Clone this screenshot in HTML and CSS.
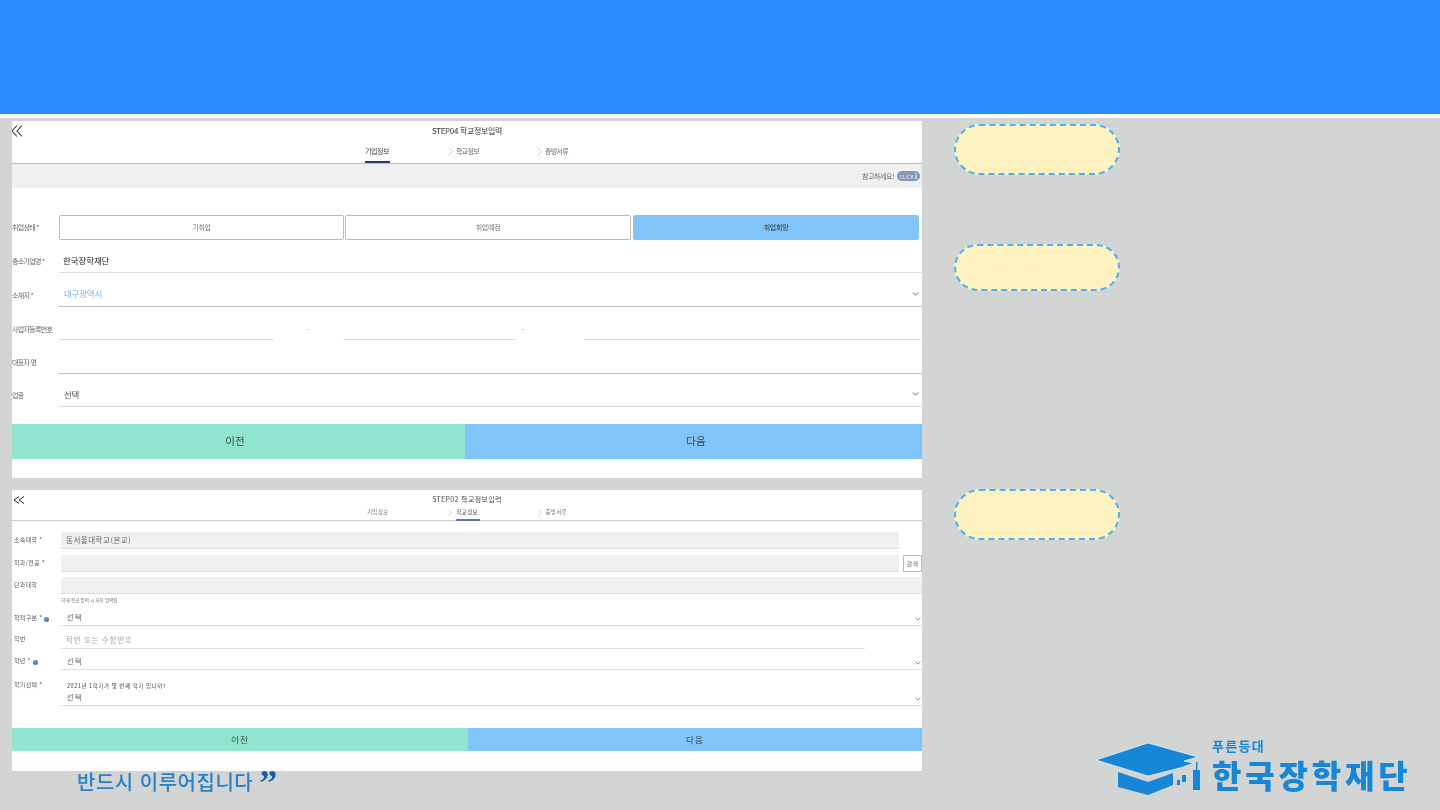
FILE: index.html
```html
<!DOCTYPE html>
<html lang="ko">
<head>
<meta charset="utf-8">
<title>한국장학재단</title>
<link rel="stylesheet" href="styles.css">
</head>
<body>
<header class="banner"></header>
<div class="stripe"></div>
<main class="main">
  <div class="shots">
    <section class="panel panel-a">
      <div class="head-a">
        <svg class="back" viewBox="0 0 10 12" width="10" height="12"><path d="M5 .5 0 6l5 5.500M10 .5 5 6l5 5.500" fill="none" stroke="#333" stroke-width="1.100"/></svg>
        <div class="title">STEP04 학교정보입력</div>
        <div class="tabs tabs-a">
          <span class="tab on">기업정보</span>
          <span class="tab t2"><svg class="gt" viewBox="0 0 5 9" width="5" height="9"><path d="M.5.5 4.500 4.500.5 8.500" fill="none" stroke="#ccc"/></svg>학교정보</span>
          <span class="tab t3"><svg class="gt" viewBox="0 0 5 9" width="5" height="9"><path d="M.5.5 4.500 4.500.5 8.500" fill="none" stroke="#ccc"/></svg>증빙서류</span>
        </div>
      </div>
      <div class="notice"><span class="notice-text">참고하세요!</span><span class="pill">CLICK <b>i</b></span></div>
      <div class="choices">
        <span class="lab lab-choice">취업상태 *</span>
        <div class="choice c1">기취업</div>
        <div class="choice c2">취업예정</div>
        <div class="choice sel">취업희망</div>
      </div>
      <div class="row r-light"><span class="lab">중소기업명 *</span><div class="val dark">한국장학재단</div></div>
      <div class="row r-strong r-tall"><span class="lab">소재지 *</span><div class="val blue">대구광역시</div>
        <svg class="chev" viewBox="0 0 8 5" width="7" height="4"><path d="M.5.5 4 4l3.500-3.500" fill="none" stroke="#444"/></svg></div>
      <div class="row biz"><span class="lab">사업자등록번호</span>
        <div class="seg s1"></div><span class="dash d1">-</span><div class="seg s2"></div><span class="dash d2">-</span><div class="seg s3"></div></div>
      <div class="row r-strong r-tall"><span class="lab">대표자 명</span></div>
      <div class="row r-light"><span class="lab">업종</span><div class="val">선택</div>
        <svg class="chev" viewBox="0 0 8 5" width="7" height="4"><path d="M.5.5 4 4l3.500-3.500" fill="none" stroke="#444"/></svg></div>
      <div class="actions act-a"><div class="prev pa">이전</div><div class="next na">다음</div></div>
    </section>

    <section class="panel panel-b">
      <div class="head-b">
        <svg class="back back-b" viewBox="0 0 10 8" width="10" height="8"><path d="M5 .5 0 4l5 3.500M10 .5 5 4l5 3.500" fill="none" stroke="#222" stroke-width="1"/></svg>
        <div class="title title-b">STEP02 학교정보입력</div>
        <div class="tabs tabs-b">
          <span class="tab">기업정보</span>
          <span class="tab t2b on-b"><svg class="gt gtb" viewBox="0 0 4 7" width="4" height="7"><path d="M.5.5 3.500 3.500.5 6.500" fill="none" stroke="#ccc"/></svg><i class="ul">학교정보</i></span>
          <span class="tab t3b"><svg class="gt gtb" viewBox="0 0 4 7" width="4" height="7"><path d="M.5.5 3.500 3.500.5 6.500" fill="none" stroke="#ccc"/></svg>증빙서류</span>
        </div>
      </div>
      <div class="f-row f1"><span class="lb">소속대학 *</span><div class="fill short">동서울대학교(본교)</div></div>
      <div class="f-row f2"><span class="lb">학과/전공 *</span><div class="fill short"></div><div class="search">검색</div></div>
      <div class="f-row f3"><span class="lb">단과대학</span><div class="fill wide"></div></div>
      <div class="hint">학과/전공 입력 시 자동 입력됨</div>
      <div class="f-row sel-row s-a"><span class="lb">학적구분 * <em class="dot">i</em></span><div class="line wide">선택</div>
        <svg class="chev" viewBox="0 0 8 5" width="6" height="4"><path d="M.5.5 4 4l3.500-3.500" fill="none" stroke="#666"/></svg></div>
      <div class="f-row sel-row s-b"><span class="lb">학번</span><div class="line mid ph">학번 또는 수험번호</div></div>
      <div class="f-row sel-row s-c"><span class="lb">학년 * <em class="dot">i</em></span><div class="line wide">선택</div>
        <svg class="chev" viewBox="0 0 8 5" width="6" height="4"><path d="M.5.5 4 4l3.500-3.500" fill="none" stroke="#666"/></svg></div>
      <div class="f-row term"><span class="lb">학기선택 *</span>
        <div class="line wide col"><span class="q">2021년 1학기가 몇 번째 학기 입니까?</span><span>선택</span></div>
        <svg class="chev" viewBox="0 0 8 5" width="6" height="4"><path d="M.5.5 4 4l3.500-3.500" fill="none" stroke="#666"/></svg></div>
      <div class="actions act-b"><div class="prev pb">이전</div><div class="next">다음</div></div>
    </section>
  </div>
  <aside class="notes">
    <div class="note n1"></div>
    <div class="note n2"></div>
    <div class="note n3"></div>
  </aside>
</main>
<div class="slogan">반드시 이루어집니다 <span class="quote">”</span></div>
<div class="logo">
  <svg class="cap" viewBox="0 0 110 52" width="110" height="52">
    <path d="M22 29 52 39 77 30V42L52 52 22 44z" fill="#1587d6"/>
    <path d="M0 17 52 0 102 14 88 18 98 20 84 25 52 33z" fill="#1587d6" stroke="#e8eef2" stroke-width=".8"/>
    <path d="M81 37h3v5h-3zM86 32h4v7h-4z" fill="#1587d6"/>
    <path d="M100 19h1.500v8h2.500v20h-7V27h3z" fill="#1587d6"/>
  </svg>
  <div class="logo-text"><span class="logo-top">푸른등대</span><span class="logo-main">한국장학재단</span></div>
</div>
</body>
</html>
```
FILE: styles.css
```css
* { box-sizing: border-box; }
html, body { margin: 0; height: 810px; overflow: hidden; }
body {
  position: relative;
  background: #d3d5d4;
  font-family: "Noto Sans CJK KR", "Noto Sans", sans-serif;
  color: #444;
}
.banner { height: 114px; background: #2a8cff; }
.stripe { height: 4px; background: #fff; }
.main { display: flex; padding-left: 12px; }
.shots { width: 910px; padding-top: 3px; display: flex; flex-direction: column; gap: 12px; }
.panel { background: #fff; overflow: hidden; filter: blur(.35px); }
.panel-a { height: 357px; }
.panel-b { height: 281px; }

/* panel A header */
.head-a { position: relative; height: 43px; border-bottom: 1px solid #bbb; }
.back { position: absolute; left: 0; top: 4px; }
.back-b { left: 2px; top: 6px; }
.title { text-align: center; font-size: 8px; line-height: 10px; padding-top: 5px; color: #333; letter-spacing: -.35px; }
.tabs { display: flex; font-size: 7px; line-height: 10px; color: #666; }
.tabs-a { padding: 10px 0 0 353px; letter-spacing: -.7px; }
.tab { position: relative; display: block; white-space: nowrap; }
.tab.on { width: 25px; height: 17px; font-size: 7px; letter-spacing: -.4px; color: #444; border-bottom: 2px solid #1a3f7a; }
.tab.t2 { margin-left: 66px; width: 89px; }
.gt { position: absolute; left: -8px; top: 1px; }
.notice {
  height: 24px; background: #f0f0f0; display: flex; align-items: center; justify-content: flex-end;
  gap: 3px; padding-right: 2px; color: #666;
}
.notice-text { font-size: 7px; letter-spacing: -.4px; }
.pill {
  width: 23px; height: 10px; border-radius: 5px; background: #8199b5; color: #eef;
  font-size: 5px; line-height: 10px; text-align: center;
}
.pill b { color: #fff; font-size: 7px; }
.choices { position: relative; display: flex; gap: 1px; margin-top: 27px; padding-left: 47px; height: 25px; align-items: flex-start; }
.choice {
  height: 25px; border: 1px solid #bbb; border-radius: 2px; font-size: 7px; line-height: 23px;
  letter-spacing: -.3px; text-align: center; color: #777; background: #fff;
}
.c1 { width: 285px; }
.c2 { width: 286px; }
.sel { width: 286px; margin-left: 1px; background: #80c4fa; border-color: #80c4fa; color: #333; }
.lab {
  position: absolute; left: 0; bottom: 6px; font-size: 7px; line-height: 10px; letter-spacing: -.7px; color: #666; white-space: nowrap;
}
.lab-choice { bottom: 8px; }
.row { position: relative; height: 33px; margin-left: 47px; border-bottom: 1px solid #ddd; padding-bottom: 6px; display: flex; align-items: flex-end; }
.row .lab { left: -47px; }
.r-tall { height: 34px; padding-bottom: 7px; }
.r-strong { border-bottom-color: #bbb; }
.val { padding-left: 5px; font-size: 8.500px; line-height: 11px; color: #555; letter-spacing: -.2px; }
.val.dark { padding-left: 4px; font-size: 8.500px; color: #222; letter-spacing: -.1px; }
.val.blue { color: #6db3f0; }
.chev { position: absolute; right: 3px; bottom: 10px; }
.biz { border-bottom: 0; padding-bottom: 5px; }
.seg { align-self: flex-end; height: 1px; background: #ddd; margin-bottom: -5px; }
.s1 { width: 215px; }
.s2 { width: 173px; }
.s3 { width: 337px; }
.dash { font-size: 6px; line-height: 10px; color: #666; text-align: center; }
.d1 { width: 69px; }
.d2 { width: 68px; padding-right: 54px; }
.actions { display: flex; text-align: center; color: #444; }
.act-a { margin-top: 17px; height: 35px; font-size: 10.500px; line-height: 33px; }
.act-b { margin-top: 22px; height: 23px; font-size: 8.500px; line-height: 23px; letter-spacing: 1.300px; }
.prev { background: #90e4d0; }
.pa { width: 453px; padding-right: 7px; }
.pb { width: 456px; }
.next { flex: 1; background: #80c4fa; }
.na { padding-left: 5px; }

/* panel B */
.head-b { position: relative; height: 31px; border-bottom: 1px solid #ccc; }
.title-b { font-size: 7px; line-height: 9px; letter-spacing: .35px; padding-top: 5px; color: #444; }
.tabs-b { font-size: 5.500px; line-height: 8px; padding: 4px 0 0 355px; color: #777; letter-spacing: .3px; }
.t2b { margin-left: 67px; width: 90px; color: #444; padding-left: 1px; }
.ul { display: block; font-style: normal; width: 24px; height: 13px; border-bottom: 2px solid #5a78a8; }
.gtb { left: -7px; top: 1px; }
.f-row { position: relative; display: flex; align-items: stretch; padding-left: 49px; font-size: 6.500px; letter-spacing: .4px; color: #666; }
.f1 { margin-top: 11px; height: 17px; }
.f2 { margin-top: 6px; height: 17px; }
.f3 { margin-top: 5px; height: 17px; }
.lb { position: absolute; left: 2px; top: 4px; font-size: 6px; line-height: 8px; white-space: nowrap; color: #556; letter-spacing: .3px; }
.fill { background: #f0f0f0; border-bottom: 1px solid #ddd; font-size: 7.500px; line-height: 16px; padding-left: 5px; letter-spacing: .5px; }
.short { width: 838px; }
.wide { width: 861px; }
.mid { width: 804px; }
.search {
  position: absolute; left: 891px; top: 0; width: 19px; height: 17px; border: 1px solid #bbb;
  font-size: 6px; line-height: 15px; text-align: center; background: #fff;
}
.hint { padding: 3px 0 0 49px; font-size: 4.500px; line-height: 7px; color: #667; }
.sel-row { height: 22px; }
.s-a { height: 22px; }
.s-a .lb { top: 10px; }
.s-b { height: 23px; }
.s-b .lb { top: 9px; }
.s-c { height: 21px; }
.s-c .lb { top: 8px; }
.line { border-bottom: 1px solid #ddd; display: flex; align-items: flex-end; padding: 0 0 3px 6px; line-height: 10px; font-size: 7px; color: #555; letter-spacing: 1.500px; }
.ph { color: #aaa; font-size: 7.500px; letter-spacing: .7px; padding-left: 5px; }
.dot {
  display: inline-block; width: 5px; height: 5px; border-radius: 50%; background: #4a7fb0; color: #fff;
  font-size: 3px; line-height: 5px; text-align: center; font-style: normal; letter-spacing: 0;
}
.sel-row .chev, .term .chev { right: 1px; bottom: 5px; }
.term { height: 36px; }
.term .lb { top: 11px; }
.col { flex-direction: column; align-items: flex-start; justify-content: flex-end; gap: 2px; }
.q { font-size: 5.500px; line-height: 8px; color: #445; letter-spacing: .55px; }

/* callouts */
.notes { margin-left: 32px; width: 166px; padding-top: 6px; display: flex; flex-direction: column; }
.note { width: 166px; background: #fdf2c0; border: 2px dashed #4db0f5; }
.n1 { height: 51px; border-radius: 26px; }
.n2 { height: 47px; margin-top: 69px; border-radius: 24px; }
.n3 { height: 51px; margin-top: 198px; border-radius: 26px; }

/* overlays on the slide */
.slogan {
  position: absolute; left: 77px; top: 768px; font-size: 20px; line-height: 28px; letter-spacing: .5px; font-weight: 500;
  color: #2a80c8; filter: blur(.3px); white-space: nowrap;
}
.quote { position: relative; top: 5px; font-family: "Liberation Serif", serif; font-size: 36px; line-height: 20px; font-weight: 700; color: #17609f; letter-spacing: 0; }
.logo { position: absolute; left: 1096px; top: 743px; display: flex; filter: blur(.3px); }
.cap { display: block; }
.logo-text { display: flex; flex-direction: column; margin-left: 6px; margin-top: -6px; color: #1587d6; }
.logo-top { font-size: 13px; line-height: 18px; font-weight: 700; letter-spacing: 1.300px; color: #1587d6; }
.logo-main { font-size: 32px; line-height: 36px; font-weight: 900; letter-spacing: 3.800px; white-space: nowrap; margin-top: 1px; }
```
